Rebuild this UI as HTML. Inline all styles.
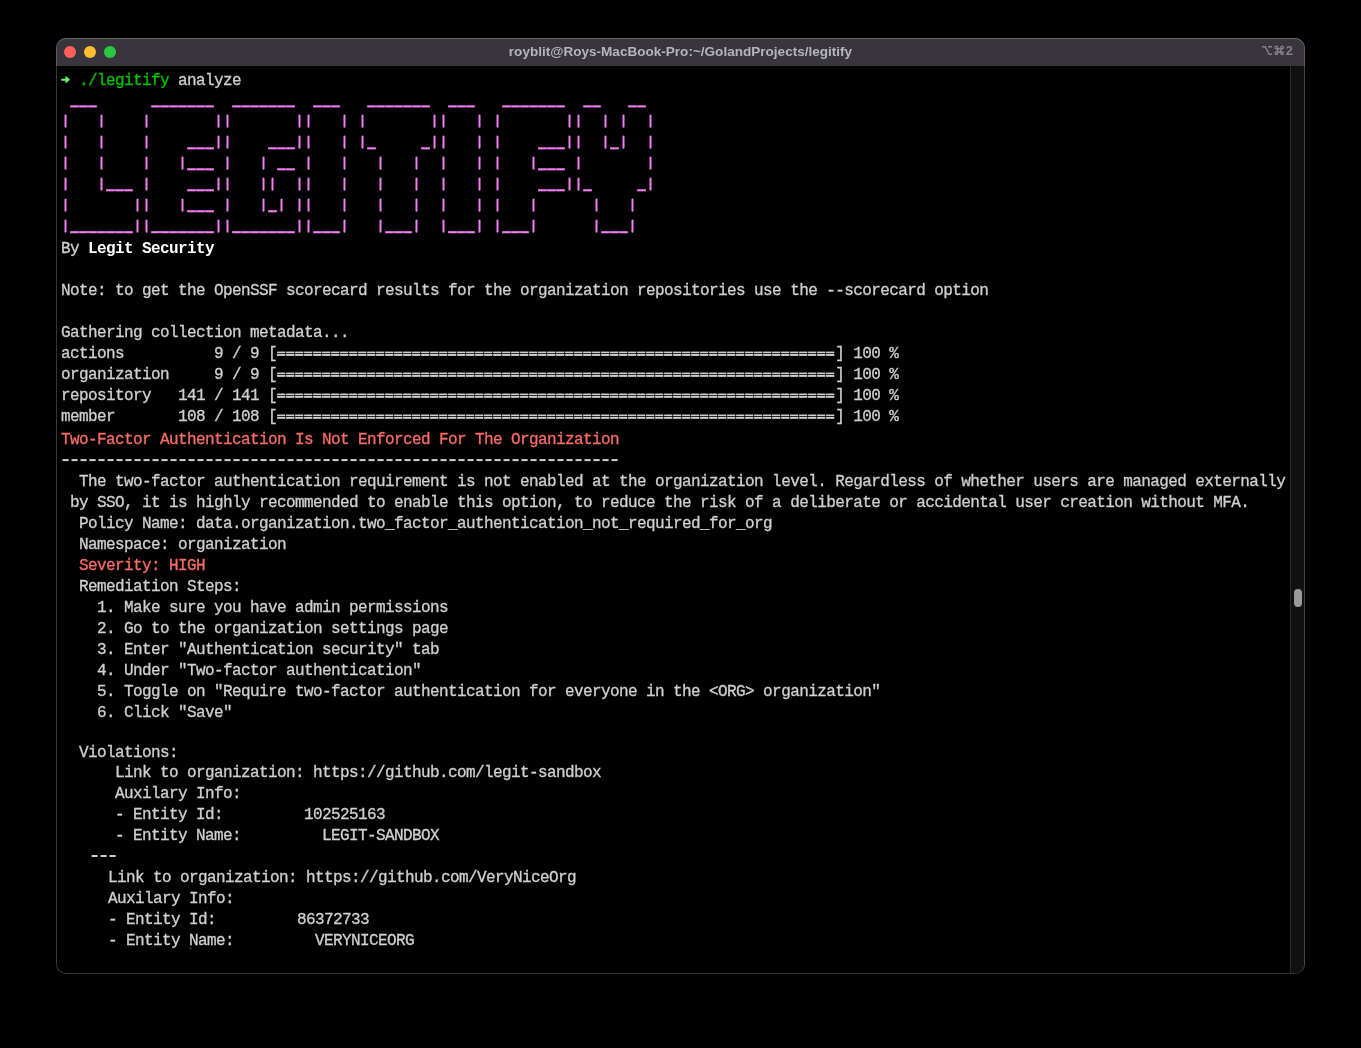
<!DOCTYPE html>
<html><head><meta charset="utf-8"><style>
html,body{margin:0;padding:0;background:#000;width:1361px;height:1048px;overflow:hidden;}
.win{position:absolute;left:56px;top:38px;width:1249px;height:936px;box-sizing:border-box;border-radius:10px;border:1px solid #363636;border-right-color:#444;background:#000;overflow:hidden;}
.tb{position:absolute;left:0;top:0;right:0;height:27px;background:#38353c;}
.tbb{position:absolute;left:56px;top:38px;width:1249px;height:28px;box-sizing:border-box;border:1px solid #67656b;border-bottom:none;border-left-color:#5f5d63;border-right-color:#5f5d63;border-radius:10px 10px 0 0;}
.title{position:absolute;left:57px;top:39px;width:1247px;height:27px;text-align:center;font-family:"Liberation Sans",sans-serif;font-weight:bold;font-size:13.55px;line-height:25.6px;color:#b6b5bb;will-change:transform;}
.dot{position:absolute;width:12px;height:12px;border-radius:50%;top:46px;}
.t{position:absolute;left:0;white-space:pre;font-family:"Liberation Mono",monospace;font-size:16px;letter-spacing:-0.6px;line-height:20.976px;color:#d0d0d0;-webkit-text-stroke:0.3px currentColor;will-change:transform;}
.g{color:#00c400}.b{color:#fff;font-weight:bold;-webkit-text-stroke:0}.r{color:#fa6c66}
.sb{position:absolute;left:1233px;top:27px;right:0;bottom:0;background:#111;border-left:1px solid #2a2a2a;}
.thumb{position:absolute;left:1294px;top:589px;width:8px;height:18px;border-radius:4px;background:#9a9a9a;}
</style></head><body>
<div class="win"><div class="tb"></div><div class="sb"></div></div>
<div class="tbb"></div>
<div class="title">royblit@Roys-MacBook-Pro:~/GolandProjects/legitify</div>
<div class="dot" style="left:64px;background:#fe5f57"></div>
<div class="dot" style="left:84px;background:#febc2e"></div>
<div class="dot" style="left:104px;background:#28c840"></div>

<div class="t" style="left:61.00px;top:71.05px"><span class="g">  ./legitify</span> analyze</div>
<div class="t" style="left:61.00px;top:238.86px">By <span class="b">Legit Security</span></div>
<div class="t" style="left:61.00px;top:280.81px">Note: to get the OpenSSF scorecard results for the organization repositories use the --scorecard option</div>
<div class="t" style="left:61.00px;top:322.77px">Gathering collection metadata...</div>
<div class="t" style="left:61.00px;top:343.74px">actions          9 / 9 [                                                              ] 100 %</div>
<div class="t" style="left:61.00px;top:364.72px">organization     9 / 9 [                                                              ] 100 %</div>
<div class="t" style="left:61.00px;top:385.69px">repository   141 / 141 [                                                              ] 100 %</div>
<div class="t" style="left:61.00px;top:406.67px">member       108 / 108 [                                                              ] 100 %</div>
<div class="t" style="left:61.00px;top:429.65px"><span class="r">Two-Factor Authentication Is Not Enforced For The Organization</span></div>
<div class="t" style="left:61.00px;top:471.60px">  The two-factor authentication requirement is not enabled at the organization level. Regardless of whether users are managed externally</div>
<div class="t" style="left:61.00px;top:492.57px"> by SSO, it is highly recommended to enable this option, to reduce the risk of a deliberate or accidental user creation without MFA.</div>
<div class="t" style="left:61.00px;top:513.55px">  Policy Name: data.organization.two_factor_authentication_not_required_for_org</div>
<div class="t" style="left:61.00px;top:534.53px">  Namespace: organization</div>
<div class="t" style="left:61.00px;top:555.50px"><span class="r">  Severity: HIGH</span></div>
<div class="t" style="left:61.00px;top:577.28px">  Remediation Steps:</div>
<div class="t" style="left:61.00px;top:598.25px">    1. Make sure you have admin permissions</div>
<div class="t" style="left:61.00px;top:619.23px">    2. Go to the organization settings page</div>
<div class="t" style="left:61.00px;top:640.21px">    3. Enter &quot;Authentication security&quot; tab</div>
<div class="t" style="left:61.00px;top:661.18px">    4. Under &quot;Two-factor authentication&quot;</div>
<div class="t" style="left:61.00px;top:682.16px">    5. Toggle on &quot;Require two-factor authentication for everyone in the &lt;ORG&gt; organization&quot;</div>
<div class="t" style="left:61.00px;top:703.13px">    6. Click &quot;Save&quot;</div>
<div class="t" style="left:61.00px;top:743.29px">  Violations:</div>
<div class="t" style="left:61.00px;top:763.26px">      Link to organization: https://github.com/legit-sandbox</div>
<div class="t" style="left:61.00px;top:784.24px">      Auxilary Info:</div>
<div class="t" style="left:61.00px;top:805.21px">      - Entity Id:         102525163</div>
<div class="t" style="left:61.00px;top:826.19px">      - Entity Name:         LEGIT-SANDBOX</div>
<div class="t" style="left:53.80px;top:868.14px">      Link to organization: https://github.com/VeryNiceOrg</div>
<div class="t" style="left:53.80px;top:889.12px">      Auxilary Info:</div>
<div class="t" style="left:53.80px;top:910.09px">      - Entity Id:         86372733</div>
<div class="t" style="left:53.80px;top:931.07px">      - Entity Name:         VERYNICEORG</div>
<svg style="position:absolute;left:0;top:0" width="1361" height="1048">
<g fill="#f57df5">
<rect x="70.15" y="105.33" width="8.7" height="2.1"/>
<rect x="79.15" y="105.33" width="8.7" height="2.1"/>
<rect x="88.15" y="105.33" width="8.7" height="2.1"/>
<rect x="151.15" y="105.33" width="8.7" height="2.1"/>
<rect x="160.15" y="105.33" width="8.7" height="2.1"/>
<rect x="169.15" y="105.33" width="8.7" height="2.1"/>
<rect x="178.15" y="105.33" width="8.7" height="2.1"/>
<rect x="187.15" y="105.33" width="8.7" height="2.1"/>
<rect x="196.15" y="105.33" width="8.7" height="2.1"/>
<rect x="205.15" y="105.33" width="8.7" height="2.1"/>
<rect x="232.15" y="105.33" width="8.7" height="2.1"/>
<rect x="241.15" y="105.33" width="8.7" height="2.1"/>
<rect x="250.15" y="105.33" width="8.7" height="2.1"/>
<rect x="259.15" y="105.33" width="8.7" height="2.1"/>
<rect x="268.15" y="105.33" width="8.7" height="2.1"/>
<rect x="277.15" y="105.33" width="8.7" height="2.1"/>
<rect x="286.15" y="105.33" width="8.7" height="2.1"/>
<rect x="313.15" y="105.33" width="8.7" height="2.1"/>
<rect x="322.15" y="105.33" width="8.7" height="2.1"/>
<rect x="331.15" y="105.33" width="8.7" height="2.1"/>
<rect x="367.15" y="105.33" width="8.7" height="2.1"/>
<rect x="376.15" y="105.33" width="8.7" height="2.1"/>
<rect x="385.15" y="105.33" width="8.7" height="2.1"/>
<rect x="394.15" y="105.33" width="8.7" height="2.1"/>
<rect x="403.15" y="105.33" width="8.7" height="2.1"/>
<rect x="412.15" y="105.33" width="8.7" height="2.1"/>
<rect x="421.15" y="105.33" width="8.7" height="2.1"/>
<rect x="448.15" y="105.33" width="8.7" height="2.1"/>
<rect x="457.15" y="105.33" width="8.7" height="2.1"/>
<rect x="466.15" y="105.33" width="8.7" height="2.1"/>
<rect x="502.15" y="105.33" width="8.7" height="2.1"/>
<rect x="511.15" y="105.33" width="8.7" height="2.1"/>
<rect x="520.15" y="105.33" width="8.7" height="2.1"/>
<rect x="529.15" y="105.33" width="8.7" height="2.1"/>
<rect x="538.15" y="105.33" width="8.7" height="2.1"/>
<rect x="547.15" y="105.33" width="8.7" height="2.1"/>
<rect x="556.15" y="105.33" width="8.7" height="2.1"/>
<rect x="583.15" y="105.33" width="8.7" height="2.1"/>
<rect x="592.15" y="105.33" width="8.7" height="2.1"/>
<rect x="628.15" y="105.33" width="8.7" height="2.1"/>
<rect x="637.15" y="105.33" width="8.7" height="2.1"/>
<rect x="64.50" y="114.55" width="2" height="13.2" rx="1"/>
<rect x="100.50" y="114.55" width="2" height="13.2" rx="1"/>
<rect x="145.50" y="114.55" width="2" height="13.2" rx="1"/>
<rect x="217.50" y="114.55" width="2" height="13.2" rx="1"/>
<rect x="226.50" y="114.55" width="2" height="13.2" rx="1"/>
<rect x="298.50" y="114.55" width="2" height="13.2" rx="1"/>
<rect x="307.50" y="114.55" width="2" height="13.2" rx="1"/>
<rect x="343.50" y="114.55" width="2" height="13.2" rx="1"/>
<rect x="361.50" y="114.55" width="2" height="13.2" rx="1"/>
<rect x="433.50" y="114.55" width="2" height="13.2" rx="1"/>
<rect x="442.50" y="114.55" width="2" height="13.2" rx="1"/>
<rect x="478.50" y="114.55" width="2" height="13.2" rx="1"/>
<rect x="496.50" y="114.55" width="2" height="13.2" rx="1"/>
<rect x="568.50" y="114.55" width="2" height="13.2" rx="1"/>
<rect x="577.50" y="114.55" width="2" height="13.2" rx="1"/>
<rect x="604.50" y="114.55" width="2" height="13.2" rx="1"/>
<rect x="622.50" y="114.55" width="2" height="13.2" rx="1"/>
<rect x="649.50" y="114.55" width="2" height="13.2" rx="1"/>
<rect x="64.50" y="135.53" width="2" height="13.2" rx="1"/>
<rect x="100.50" y="135.53" width="2" height="13.2" rx="1"/>
<rect x="145.50" y="135.53" width="2" height="13.2" rx="1"/>
<rect x="187.15" y="147.28" width="8.7" height="2.1"/>
<rect x="196.15" y="147.28" width="8.7" height="2.1"/>
<rect x="205.15" y="147.28" width="8.7" height="2.1"/>
<rect x="217.50" y="135.53" width="2" height="13.2" rx="1"/>
<rect x="226.50" y="135.53" width="2" height="13.2" rx="1"/>
<rect x="268.15" y="147.28" width="8.7" height="2.1"/>
<rect x="277.15" y="147.28" width="8.7" height="2.1"/>
<rect x="286.15" y="147.28" width="8.7" height="2.1"/>
<rect x="298.50" y="135.53" width="2" height="13.2" rx="1"/>
<rect x="307.50" y="135.53" width="2" height="13.2" rx="1"/>
<rect x="343.50" y="135.53" width="2" height="13.2" rx="1"/>
<rect x="361.50" y="135.53" width="2" height="13.2" rx="1"/>
<rect x="367.15" y="147.28" width="8.7" height="2.1"/>
<rect x="421.15" y="147.28" width="8.7" height="2.1"/>
<rect x="433.50" y="135.53" width="2" height="13.2" rx="1"/>
<rect x="442.50" y="135.53" width="2" height="13.2" rx="1"/>
<rect x="478.50" y="135.53" width="2" height="13.2" rx="1"/>
<rect x="496.50" y="135.53" width="2" height="13.2" rx="1"/>
<rect x="538.15" y="147.28" width="8.7" height="2.1"/>
<rect x="547.15" y="147.28" width="8.7" height="2.1"/>
<rect x="556.15" y="147.28" width="8.7" height="2.1"/>
<rect x="568.50" y="135.53" width="2" height="13.2" rx="1"/>
<rect x="577.50" y="135.53" width="2" height="13.2" rx="1"/>
<rect x="604.50" y="135.53" width="2" height="13.2" rx="1"/>
<rect x="610.15" y="147.28" width="8.7" height="2.1"/>
<rect x="622.50" y="135.53" width="2" height="13.2" rx="1"/>
<rect x="649.50" y="135.53" width="2" height="13.2" rx="1"/>
<rect x="64.50" y="156.50" width="2" height="13.2" rx="1"/>
<rect x="100.50" y="156.50" width="2" height="13.2" rx="1"/>
<rect x="145.50" y="156.50" width="2" height="13.2" rx="1"/>
<rect x="181.50" y="156.50" width="2" height="13.2" rx="1"/>
<rect x="187.15" y="168.25" width="8.7" height="2.1"/>
<rect x="196.15" y="168.25" width="8.7" height="2.1"/>
<rect x="205.15" y="168.25" width="8.7" height="2.1"/>
<rect x="226.50" y="156.50" width="2" height="13.2" rx="1"/>
<rect x="262.50" y="156.50" width="2" height="13.2" rx="1"/>
<rect x="277.15" y="168.25" width="8.7" height="2.1"/>
<rect x="286.15" y="168.25" width="8.7" height="2.1"/>
<rect x="307.50" y="156.50" width="2" height="13.2" rx="1"/>
<rect x="343.50" y="156.50" width="2" height="13.2" rx="1"/>
<rect x="379.50" y="156.50" width="2" height="13.2" rx="1"/>
<rect x="415.50" y="156.50" width="2" height="13.2" rx="1"/>
<rect x="442.50" y="156.50" width="2" height="13.2" rx="1"/>
<rect x="478.50" y="156.50" width="2" height="13.2" rx="1"/>
<rect x="496.50" y="156.50" width="2" height="13.2" rx="1"/>
<rect x="532.50" y="156.50" width="2" height="13.2" rx="1"/>
<rect x="538.15" y="168.25" width="8.7" height="2.1"/>
<rect x="547.15" y="168.25" width="8.7" height="2.1"/>
<rect x="556.15" y="168.25" width="8.7" height="2.1"/>
<rect x="577.50" y="156.50" width="2" height="13.2" rx="1"/>
<rect x="649.50" y="156.50" width="2" height="13.2" rx="1"/>
<rect x="64.50" y="177.48" width="2" height="13.2" rx="1"/>
<rect x="100.50" y="177.48" width="2" height="13.2" rx="1"/>
<rect x="106.15" y="189.23" width="8.7" height="2.1"/>
<rect x="115.15" y="189.23" width="8.7" height="2.1"/>
<rect x="124.15" y="189.23" width="8.7" height="2.1"/>
<rect x="145.50" y="177.48" width="2" height="13.2" rx="1"/>
<rect x="187.15" y="189.23" width="8.7" height="2.1"/>
<rect x="196.15" y="189.23" width="8.7" height="2.1"/>
<rect x="205.15" y="189.23" width="8.7" height="2.1"/>
<rect x="217.50" y="177.48" width="2" height="13.2" rx="1"/>
<rect x="226.50" y="177.48" width="2" height="13.2" rx="1"/>
<rect x="262.50" y="177.48" width="2" height="13.2" rx="1"/>
<rect x="271.50" y="177.48" width="2" height="13.2" rx="1"/>
<rect x="298.50" y="177.48" width="2" height="13.2" rx="1"/>
<rect x="307.50" y="177.48" width="2" height="13.2" rx="1"/>
<rect x="343.50" y="177.48" width="2" height="13.2" rx="1"/>
<rect x="379.50" y="177.48" width="2" height="13.2" rx="1"/>
<rect x="415.50" y="177.48" width="2" height="13.2" rx="1"/>
<rect x="442.50" y="177.48" width="2" height="13.2" rx="1"/>
<rect x="478.50" y="177.48" width="2" height="13.2" rx="1"/>
<rect x="496.50" y="177.48" width="2" height="13.2" rx="1"/>
<rect x="538.15" y="189.23" width="8.7" height="2.1"/>
<rect x="547.15" y="189.23" width="8.7" height="2.1"/>
<rect x="556.15" y="189.23" width="8.7" height="2.1"/>
<rect x="568.50" y="177.48" width="2" height="13.2" rx="1"/>
<rect x="577.50" y="177.48" width="2" height="13.2" rx="1"/>
<rect x="583.15" y="189.23" width="8.7" height="2.1"/>
<rect x="637.15" y="189.23" width="8.7" height="2.1"/>
<rect x="649.50" y="177.48" width="2" height="13.2" rx="1"/>
<rect x="64.50" y="198.46" width="2" height="13.2" rx="1"/>
<rect x="136.50" y="198.46" width="2" height="13.2" rx="1"/>
<rect x="145.50" y="198.46" width="2" height="13.2" rx="1"/>
<rect x="181.50" y="198.46" width="2" height="13.2" rx="1"/>
<rect x="187.15" y="210.21" width="8.7" height="2.1"/>
<rect x="196.15" y="210.21" width="8.7" height="2.1"/>
<rect x="205.15" y="210.21" width="8.7" height="2.1"/>
<rect x="226.50" y="198.46" width="2" height="13.2" rx="1"/>
<rect x="262.50" y="198.46" width="2" height="13.2" rx="1"/>
<rect x="268.15" y="210.21" width="8.7" height="2.1"/>
<rect x="280.50" y="198.46" width="2" height="13.2" rx="1"/>
<rect x="298.50" y="198.46" width="2" height="13.2" rx="1"/>
<rect x="307.50" y="198.46" width="2" height="13.2" rx="1"/>
<rect x="343.50" y="198.46" width="2" height="13.2" rx="1"/>
<rect x="379.50" y="198.46" width="2" height="13.2" rx="1"/>
<rect x="415.50" y="198.46" width="2" height="13.2" rx="1"/>
<rect x="442.50" y="198.46" width="2" height="13.2" rx="1"/>
<rect x="478.50" y="198.46" width="2" height="13.2" rx="1"/>
<rect x="496.50" y="198.46" width="2" height="13.2" rx="1"/>
<rect x="532.50" y="198.46" width="2" height="13.2" rx="1"/>
<rect x="595.50" y="198.46" width="2" height="13.2" rx="1"/>
<rect x="631.50" y="198.46" width="2" height="13.2" rx="1"/>
<rect x="64.50" y="219.43" width="2" height="13.2" rx="1"/>
<rect x="70.15" y="231.18" width="8.7" height="2.1"/>
<rect x="79.15" y="231.18" width="8.7" height="2.1"/>
<rect x="88.15" y="231.18" width="8.7" height="2.1"/>
<rect x="97.15" y="231.18" width="8.7" height="2.1"/>
<rect x="106.15" y="231.18" width="8.7" height="2.1"/>
<rect x="115.15" y="231.18" width="8.7" height="2.1"/>
<rect x="124.15" y="231.18" width="8.7" height="2.1"/>
<rect x="136.50" y="219.43" width="2" height="13.2" rx="1"/>
<rect x="145.50" y="219.43" width="2" height="13.2" rx="1"/>
<rect x="151.15" y="231.18" width="8.7" height="2.1"/>
<rect x="160.15" y="231.18" width="8.7" height="2.1"/>
<rect x="169.15" y="231.18" width="8.7" height="2.1"/>
<rect x="178.15" y="231.18" width="8.7" height="2.1"/>
<rect x="187.15" y="231.18" width="8.7" height="2.1"/>
<rect x="196.15" y="231.18" width="8.7" height="2.1"/>
<rect x="205.15" y="231.18" width="8.7" height="2.1"/>
<rect x="217.50" y="219.43" width="2" height="13.2" rx="1"/>
<rect x="226.50" y="219.43" width="2" height="13.2" rx="1"/>
<rect x="232.15" y="231.18" width="8.7" height="2.1"/>
<rect x="241.15" y="231.18" width="8.7" height="2.1"/>
<rect x="250.15" y="231.18" width="8.7" height="2.1"/>
<rect x="259.15" y="231.18" width="8.7" height="2.1"/>
<rect x="268.15" y="231.18" width="8.7" height="2.1"/>
<rect x="277.15" y="231.18" width="8.7" height="2.1"/>
<rect x="286.15" y="231.18" width="8.7" height="2.1"/>
<rect x="298.50" y="219.43" width="2" height="13.2" rx="1"/>
<rect x="307.50" y="219.43" width="2" height="13.2" rx="1"/>
<rect x="313.15" y="231.18" width="8.7" height="2.1"/>
<rect x="322.15" y="231.18" width="8.7" height="2.1"/>
<rect x="331.15" y="231.18" width="8.7" height="2.1"/>
<rect x="343.50" y="219.43" width="2" height="13.2" rx="1"/>
<rect x="379.50" y="219.43" width="2" height="13.2" rx="1"/>
<rect x="385.15" y="231.18" width="8.7" height="2.1"/>
<rect x="394.15" y="231.18" width="8.7" height="2.1"/>
<rect x="403.15" y="231.18" width="8.7" height="2.1"/>
<rect x="415.50" y="219.43" width="2" height="13.2" rx="1"/>
<rect x="442.50" y="219.43" width="2" height="13.2" rx="1"/>
<rect x="448.15" y="231.18" width="8.7" height="2.1"/>
<rect x="457.15" y="231.18" width="8.7" height="2.1"/>
<rect x="466.15" y="231.18" width="8.7" height="2.1"/>
<rect x="478.50" y="219.43" width="2" height="13.2" rx="1"/>
<rect x="496.50" y="219.43" width="2" height="13.2" rx="1"/>
<rect x="502.15" y="231.18" width="8.7" height="2.1"/>
<rect x="511.15" y="231.18" width="8.7" height="2.1"/>
<rect x="520.15" y="231.18" width="8.7" height="2.1"/>
<rect x="532.50" y="219.43" width="2" height="13.2" rx="1"/>
<rect x="595.50" y="219.43" width="2" height="13.2" rx="1"/>
<rect x="601.15" y="231.18" width="8.7" height="2.1"/>
<rect x="610.15" y="231.18" width="8.7" height="2.1"/>
<rect x="619.15" y="231.18" width="8.7" height="2.1"/>
<rect x="631.50" y="219.43" width="2" height="13.2" rx="1"/>
</g>
<rect x="61.1" y="78.65" width="5.5" height="2" rx="0.9" fill="#62fb6c"/>
<path d="M65.9 76.6 L69.6 79.65 L65.9 82.7 Z" stroke="#62fb6c" stroke-width="0.9" stroke-linejoin="round" fill="#62fb6c"/>
<g fill="#d0d0d0">
<rect x="277.10" y="351.59" width="8.2" height="1.6"/><rect x="277.10" y="353.99" width="8.2" height="1.9"/>
<rect x="286.10" y="351.59" width="8.2" height="1.6"/><rect x="286.10" y="353.99" width="8.2" height="1.9"/>
<rect x="295.10" y="351.59" width="8.2" height="1.6"/><rect x="295.10" y="353.99" width="8.2" height="1.9"/>
<rect x="304.10" y="351.59" width="8.2" height="1.6"/><rect x="304.10" y="353.99" width="8.2" height="1.9"/>
<rect x="313.10" y="351.59" width="8.2" height="1.6"/><rect x="313.10" y="353.99" width="8.2" height="1.9"/>
<rect x="322.10" y="351.59" width="8.2" height="1.6"/><rect x="322.10" y="353.99" width="8.2" height="1.9"/>
<rect x="331.10" y="351.59" width="8.2" height="1.6"/><rect x="331.10" y="353.99" width="8.2" height="1.9"/>
<rect x="340.10" y="351.59" width="8.2" height="1.6"/><rect x="340.10" y="353.99" width="8.2" height="1.9"/>
<rect x="349.10" y="351.59" width="8.2" height="1.6"/><rect x="349.10" y="353.99" width="8.2" height="1.9"/>
<rect x="358.10" y="351.59" width="8.2" height="1.6"/><rect x="358.10" y="353.99" width="8.2" height="1.9"/>
<rect x="367.10" y="351.59" width="8.2" height="1.6"/><rect x="367.10" y="353.99" width="8.2" height="1.9"/>
<rect x="376.10" y="351.59" width="8.2" height="1.6"/><rect x="376.10" y="353.99" width="8.2" height="1.9"/>
<rect x="385.10" y="351.59" width="8.2" height="1.6"/><rect x="385.10" y="353.99" width="8.2" height="1.9"/>
<rect x="394.10" y="351.59" width="8.2" height="1.6"/><rect x="394.10" y="353.99" width="8.2" height="1.9"/>
<rect x="403.10" y="351.59" width="8.2" height="1.6"/><rect x="403.10" y="353.99" width="8.2" height="1.9"/>
<rect x="412.10" y="351.59" width="8.2" height="1.6"/><rect x="412.10" y="353.99" width="8.2" height="1.9"/>
<rect x="421.10" y="351.59" width="8.2" height="1.6"/><rect x="421.10" y="353.99" width="8.2" height="1.9"/>
<rect x="430.10" y="351.59" width="8.2" height="1.6"/><rect x="430.10" y="353.99" width="8.2" height="1.9"/>
<rect x="439.10" y="351.59" width="8.2" height="1.6"/><rect x="439.10" y="353.99" width="8.2" height="1.9"/>
<rect x="448.10" y="351.59" width="8.2" height="1.6"/><rect x="448.10" y="353.99" width="8.2" height="1.9"/>
<rect x="457.10" y="351.59" width="8.2" height="1.6"/><rect x="457.10" y="353.99" width="8.2" height="1.9"/>
<rect x="466.10" y="351.59" width="8.2" height="1.6"/><rect x="466.10" y="353.99" width="8.2" height="1.9"/>
<rect x="475.10" y="351.59" width="8.2" height="1.6"/><rect x="475.10" y="353.99" width="8.2" height="1.9"/>
<rect x="484.10" y="351.59" width="8.2" height="1.6"/><rect x="484.10" y="353.99" width="8.2" height="1.9"/>
<rect x="493.10" y="351.59" width="8.2" height="1.6"/><rect x="493.10" y="353.99" width="8.2" height="1.9"/>
<rect x="502.10" y="351.59" width="8.2" height="1.6"/><rect x="502.10" y="353.99" width="8.2" height="1.9"/>
<rect x="511.10" y="351.59" width="8.2" height="1.6"/><rect x="511.10" y="353.99" width="8.2" height="1.9"/>
<rect x="520.10" y="351.59" width="8.2" height="1.6"/><rect x="520.10" y="353.99" width="8.2" height="1.9"/>
<rect x="529.10" y="351.59" width="8.2" height="1.6"/><rect x="529.10" y="353.99" width="8.2" height="1.9"/>
<rect x="538.10" y="351.59" width="8.2" height="1.6"/><rect x="538.10" y="353.99" width="8.2" height="1.9"/>
<rect x="547.10" y="351.59" width="8.2" height="1.6"/><rect x="547.10" y="353.99" width="8.2" height="1.9"/>
<rect x="556.10" y="351.59" width="8.2" height="1.6"/><rect x="556.10" y="353.99" width="8.2" height="1.9"/>
<rect x="565.10" y="351.59" width="8.2" height="1.6"/><rect x="565.10" y="353.99" width="8.2" height="1.9"/>
<rect x="574.10" y="351.59" width="8.2" height="1.6"/><rect x="574.10" y="353.99" width="8.2" height="1.9"/>
<rect x="583.10" y="351.59" width="8.2" height="1.6"/><rect x="583.10" y="353.99" width="8.2" height="1.9"/>
<rect x="592.10" y="351.59" width="8.2" height="1.6"/><rect x="592.10" y="353.99" width="8.2" height="1.9"/>
<rect x="601.10" y="351.59" width="8.2" height="1.6"/><rect x="601.10" y="353.99" width="8.2" height="1.9"/>
<rect x="610.10" y="351.59" width="8.2" height="1.6"/><rect x="610.10" y="353.99" width="8.2" height="1.9"/>
<rect x="619.10" y="351.59" width="8.2" height="1.6"/><rect x="619.10" y="353.99" width="8.2" height="1.9"/>
<rect x="628.10" y="351.59" width="8.2" height="1.6"/><rect x="628.10" y="353.99" width="8.2" height="1.9"/>
<rect x="637.10" y="351.59" width="8.2" height="1.6"/><rect x="637.10" y="353.99" width="8.2" height="1.9"/>
<rect x="646.10" y="351.59" width="8.2" height="1.6"/><rect x="646.10" y="353.99" width="8.2" height="1.9"/>
<rect x="655.10" y="351.59" width="8.2" height="1.6"/><rect x="655.10" y="353.99" width="8.2" height="1.9"/>
<rect x="664.10" y="351.59" width="8.2" height="1.6"/><rect x="664.10" y="353.99" width="8.2" height="1.9"/>
<rect x="673.10" y="351.59" width="8.2" height="1.6"/><rect x="673.10" y="353.99" width="8.2" height="1.9"/>
<rect x="682.10" y="351.59" width="8.2" height="1.6"/><rect x="682.10" y="353.99" width="8.2" height="1.9"/>
<rect x="691.10" y="351.59" width="8.2" height="1.6"/><rect x="691.10" y="353.99" width="8.2" height="1.9"/>
<rect x="700.10" y="351.59" width="8.2" height="1.6"/><rect x="700.10" y="353.99" width="8.2" height="1.9"/>
<rect x="709.10" y="351.59" width="8.2" height="1.6"/><rect x="709.10" y="353.99" width="8.2" height="1.9"/>
<rect x="718.10" y="351.59" width="8.2" height="1.6"/><rect x="718.10" y="353.99" width="8.2" height="1.9"/>
<rect x="727.10" y="351.59" width="8.2" height="1.6"/><rect x="727.10" y="353.99" width="8.2" height="1.9"/>
<rect x="736.10" y="351.59" width="8.2" height="1.6"/><rect x="736.10" y="353.99" width="8.2" height="1.9"/>
<rect x="745.10" y="351.59" width="8.2" height="1.6"/><rect x="745.10" y="353.99" width="8.2" height="1.9"/>
<rect x="754.10" y="351.59" width="8.2" height="1.6"/><rect x="754.10" y="353.99" width="8.2" height="1.9"/>
<rect x="763.10" y="351.59" width="8.2" height="1.6"/><rect x="763.10" y="353.99" width="8.2" height="1.9"/>
<rect x="772.10" y="351.59" width="8.2" height="1.6"/><rect x="772.10" y="353.99" width="8.2" height="1.9"/>
<rect x="781.10" y="351.59" width="8.2" height="1.6"/><rect x="781.10" y="353.99" width="8.2" height="1.9"/>
<rect x="790.10" y="351.59" width="8.2" height="1.6"/><rect x="790.10" y="353.99" width="8.2" height="1.9"/>
<rect x="799.10" y="351.59" width="8.2" height="1.6"/><rect x="799.10" y="353.99" width="8.2" height="1.9"/>
<rect x="808.10" y="351.59" width="8.2" height="1.6"/><rect x="808.10" y="353.99" width="8.2" height="1.9"/>
<rect x="817.10" y="351.59" width="8.2" height="1.6"/><rect x="817.10" y="353.99" width="8.2" height="1.9"/>
<rect x="826.10" y="351.59" width="8.2" height="1.6"/><rect x="826.10" y="353.99" width="8.2" height="1.9"/>
<rect x="277.10" y="372.56" width="8.2" height="1.6"/><rect x="277.10" y="374.96" width="8.2" height="1.9"/>
<rect x="286.10" y="372.56" width="8.2" height="1.6"/><rect x="286.10" y="374.96" width="8.2" height="1.9"/>
<rect x="295.10" y="372.56" width="8.2" height="1.6"/><rect x="295.10" y="374.96" width="8.2" height="1.9"/>
<rect x="304.10" y="372.56" width="8.2" height="1.6"/><rect x="304.10" y="374.96" width="8.2" height="1.9"/>
<rect x="313.10" y="372.56" width="8.2" height="1.6"/><rect x="313.10" y="374.96" width="8.2" height="1.9"/>
<rect x="322.10" y="372.56" width="8.2" height="1.6"/><rect x="322.10" y="374.96" width="8.2" height="1.9"/>
<rect x="331.10" y="372.56" width="8.2" height="1.6"/><rect x="331.10" y="374.96" width="8.2" height="1.9"/>
<rect x="340.10" y="372.56" width="8.2" height="1.6"/><rect x="340.10" y="374.96" width="8.2" height="1.9"/>
<rect x="349.10" y="372.56" width="8.2" height="1.6"/><rect x="349.10" y="374.96" width="8.2" height="1.9"/>
<rect x="358.10" y="372.56" width="8.2" height="1.6"/><rect x="358.10" y="374.96" width="8.2" height="1.9"/>
<rect x="367.10" y="372.56" width="8.2" height="1.6"/><rect x="367.10" y="374.96" width="8.2" height="1.9"/>
<rect x="376.10" y="372.56" width="8.2" height="1.6"/><rect x="376.10" y="374.96" width="8.2" height="1.9"/>
<rect x="385.10" y="372.56" width="8.2" height="1.6"/><rect x="385.10" y="374.96" width="8.2" height="1.9"/>
<rect x="394.10" y="372.56" width="8.2" height="1.6"/><rect x="394.10" y="374.96" width="8.2" height="1.9"/>
<rect x="403.10" y="372.56" width="8.2" height="1.6"/><rect x="403.10" y="374.96" width="8.2" height="1.9"/>
<rect x="412.10" y="372.56" width="8.2" height="1.6"/><rect x="412.10" y="374.96" width="8.2" height="1.9"/>
<rect x="421.10" y="372.56" width="8.2" height="1.6"/><rect x="421.10" y="374.96" width="8.2" height="1.9"/>
<rect x="430.10" y="372.56" width="8.2" height="1.6"/><rect x="430.10" y="374.96" width="8.2" height="1.9"/>
<rect x="439.10" y="372.56" width="8.2" height="1.6"/><rect x="439.10" y="374.96" width="8.2" height="1.9"/>
<rect x="448.10" y="372.56" width="8.2" height="1.6"/><rect x="448.10" y="374.96" width="8.2" height="1.9"/>
<rect x="457.10" y="372.56" width="8.2" height="1.6"/><rect x="457.10" y="374.96" width="8.2" height="1.9"/>
<rect x="466.10" y="372.56" width="8.2" height="1.6"/><rect x="466.10" y="374.96" width="8.2" height="1.9"/>
<rect x="475.10" y="372.56" width="8.2" height="1.6"/><rect x="475.10" y="374.96" width="8.2" height="1.9"/>
<rect x="484.10" y="372.56" width="8.2" height="1.6"/><rect x="484.10" y="374.96" width="8.2" height="1.9"/>
<rect x="493.10" y="372.56" width="8.2" height="1.6"/><rect x="493.10" y="374.96" width="8.2" height="1.9"/>
<rect x="502.10" y="372.56" width="8.2" height="1.6"/><rect x="502.10" y="374.96" width="8.2" height="1.9"/>
<rect x="511.10" y="372.56" width="8.2" height="1.6"/><rect x="511.10" y="374.96" width="8.2" height="1.9"/>
<rect x="520.10" y="372.56" width="8.2" height="1.6"/><rect x="520.10" y="374.96" width="8.2" height="1.9"/>
<rect x="529.10" y="372.56" width="8.2" height="1.6"/><rect x="529.10" y="374.96" width="8.2" height="1.9"/>
<rect x="538.10" y="372.56" width="8.2" height="1.6"/><rect x="538.10" y="374.96" width="8.2" height="1.9"/>
<rect x="547.10" y="372.56" width="8.2" height="1.6"/><rect x="547.10" y="374.96" width="8.2" height="1.9"/>
<rect x="556.10" y="372.56" width="8.2" height="1.6"/><rect x="556.10" y="374.96" width="8.2" height="1.9"/>
<rect x="565.10" y="372.56" width="8.2" height="1.6"/><rect x="565.10" y="374.96" width="8.2" height="1.9"/>
<rect x="574.10" y="372.56" width="8.2" height="1.6"/><rect x="574.10" y="374.96" width="8.2" height="1.9"/>
<rect x="583.10" y="372.56" width="8.2" height="1.6"/><rect x="583.10" y="374.96" width="8.2" height="1.9"/>
<rect x="592.10" y="372.56" width="8.2" height="1.6"/><rect x="592.10" y="374.96" width="8.2" height="1.9"/>
<rect x="601.10" y="372.56" width="8.2" height="1.6"/><rect x="601.10" y="374.96" width="8.2" height="1.9"/>
<rect x="610.10" y="372.56" width="8.2" height="1.6"/><rect x="610.10" y="374.96" width="8.2" height="1.9"/>
<rect x="619.10" y="372.56" width="8.2" height="1.6"/><rect x="619.10" y="374.96" width="8.2" height="1.9"/>
<rect x="628.10" y="372.56" width="8.2" height="1.6"/><rect x="628.10" y="374.96" width="8.2" height="1.9"/>
<rect x="637.10" y="372.56" width="8.2" height="1.6"/><rect x="637.10" y="374.96" width="8.2" height="1.9"/>
<rect x="646.10" y="372.56" width="8.2" height="1.6"/><rect x="646.10" y="374.96" width="8.2" height="1.9"/>
<rect x="655.10" y="372.56" width="8.2" height="1.6"/><rect x="655.10" y="374.96" width="8.2" height="1.9"/>
<rect x="664.10" y="372.56" width="8.2" height="1.6"/><rect x="664.10" y="374.96" width="8.2" height="1.9"/>
<rect x="673.10" y="372.56" width="8.2" height="1.6"/><rect x="673.10" y="374.96" width="8.2" height="1.9"/>
<rect x="682.10" y="372.56" width="8.2" height="1.6"/><rect x="682.10" y="374.96" width="8.2" height="1.9"/>
<rect x="691.10" y="372.56" width="8.2" height="1.6"/><rect x="691.10" y="374.96" width="8.2" height="1.9"/>
<rect x="700.10" y="372.56" width="8.2" height="1.6"/><rect x="700.10" y="374.96" width="8.2" height="1.9"/>
<rect x="709.10" y="372.56" width="8.2" height="1.6"/><rect x="709.10" y="374.96" width="8.2" height="1.9"/>
<rect x="718.10" y="372.56" width="8.2" height="1.6"/><rect x="718.10" y="374.96" width="8.2" height="1.9"/>
<rect x="727.10" y="372.56" width="8.2" height="1.6"/><rect x="727.10" y="374.96" width="8.2" height="1.9"/>
<rect x="736.10" y="372.56" width="8.2" height="1.6"/><rect x="736.10" y="374.96" width="8.2" height="1.9"/>
<rect x="745.10" y="372.56" width="8.2" height="1.6"/><rect x="745.10" y="374.96" width="8.2" height="1.9"/>
<rect x="754.10" y="372.56" width="8.2" height="1.6"/><rect x="754.10" y="374.96" width="8.2" height="1.9"/>
<rect x="763.10" y="372.56" width="8.2" height="1.6"/><rect x="763.10" y="374.96" width="8.2" height="1.9"/>
<rect x="772.10" y="372.56" width="8.2" height="1.6"/><rect x="772.10" y="374.96" width="8.2" height="1.9"/>
<rect x="781.10" y="372.56" width="8.2" height="1.6"/><rect x="781.10" y="374.96" width="8.2" height="1.9"/>
<rect x="790.10" y="372.56" width="8.2" height="1.6"/><rect x="790.10" y="374.96" width="8.2" height="1.9"/>
<rect x="799.10" y="372.56" width="8.2" height="1.6"/><rect x="799.10" y="374.96" width="8.2" height="1.9"/>
<rect x="808.10" y="372.56" width="8.2" height="1.6"/><rect x="808.10" y="374.96" width="8.2" height="1.9"/>
<rect x="817.10" y="372.56" width="8.2" height="1.6"/><rect x="817.10" y="374.96" width="8.2" height="1.9"/>
<rect x="826.10" y="372.56" width="8.2" height="1.6"/><rect x="826.10" y="374.96" width="8.2" height="1.9"/>
<rect x="277.10" y="393.54" width="8.2" height="1.6"/><rect x="277.10" y="395.94" width="8.2" height="1.9"/>
<rect x="286.10" y="393.54" width="8.2" height="1.6"/><rect x="286.10" y="395.94" width="8.2" height="1.9"/>
<rect x="295.10" y="393.54" width="8.2" height="1.6"/><rect x="295.10" y="395.94" width="8.2" height="1.9"/>
<rect x="304.10" y="393.54" width="8.2" height="1.6"/><rect x="304.10" y="395.94" width="8.2" height="1.9"/>
<rect x="313.10" y="393.54" width="8.2" height="1.6"/><rect x="313.10" y="395.94" width="8.2" height="1.9"/>
<rect x="322.10" y="393.54" width="8.2" height="1.6"/><rect x="322.10" y="395.94" width="8.2" height="1.9"/>
<rect x="331.10" y="393.54" width="8.2" height="1.6"/><rect x="331.10" y="395.94" width="8.2" height="1.9"/>
<rect x="340.10" y="393.54" width="8.2" height="1.6"/><rect x="340.10" y="395.94" width="8.2" height="1.9"/>
<rect x="349.10" y="393.54" width="8.2" height="1.6"/><rect x="349.10" y="395.94" width="8.2" height="1.9"/>
<rect x="358.10" y="393.54" width="8.2" height="1.6"/><rect x="358.10" y="395.94" width="8.2" height="1.9"/>
<rect x="367.10" y="393.54" width="8.2" height="1.6"/><rect x="367.10" y="395.94" width="8.2" height="1.9"/>
<rect x="376.10" y="393.54" width="8.2" height="1.6"/><rect x="376.10" y="395.94" width="8.2" height="1.9"/>
<rect x="385.10" y="393.54" width="8.2" height="1.6"/><rect x="385.10" y="395.94" width="8.2" height="1.9"/>
<rect x="394.10" y="393.54" width="8.2" height="1.6"/><rect x="394.10" y="395.94" width="8.2" height="1.9"/>
<rect x="403.10" y="393.54" width="8.2" height="1.6"/><rect x="403.10" y="395.94" width="8.2" height="1.9"/>
<rect x="412.10" y="393.54" width="8.2" height="1.6"/><rect x="412.10" y="395.94" width="8.2" height="1.9"/>
<rect x="421.10" y="393.54" width="8.2" height="1.6"/><rect x="421.10" y="395.94" width="8.2" height="1.9"/>
<rect x="430.10" y="393.54" width="8.2" height="1.6"/><rect x="430.10" y="395.94" width="8.2" height="1.9"/>
<rect x="439.10" y="393.54" width="8.2" height="1.6"/><rect x="439.10" y="395.94" width="8.2" height="1.9"/>
<rect x="448.10" y="393.54" width="8.2" height="1.6"/><rect x="448.10" y="395.94" width="8.2" height="1.9"/>
<rect x="457.10" y="393.54" width="8.2" height="1.6"/><rect x="457.10" y="395.94" width="8.2" height="1.9"/>
<rect x="466.10" y="393.54" width="8.2" height="1.6"/><rect x="466.10" y="395.94" width="8.2" height="1.9"/>
<rect x="475.10" y="393.54" width="8.2" height="1.6"/><rect x="475.10" y="395.94" width="8.2" height="1.9"/>
<rect x="484.10" y="393.54" width="8.2" height="1.6"/><rect x="484.10" y="395.94" width="8.2" height="1.9"/>
<rect x="493.10" y="393.54" width="8.2" height="1.6"/><rect x="493.10" y="395.94" width="8.2" height="1.9"/>
<rect x="502.10" y="393.54" width="8.2" height="1.6"/><rect x="502.10" y="395.94" width="8.2" height="1.9"/>
<rect x="511.10" y="393.54" width="8.2" height="1.6"/><rect x="511.10" y="395.94" width="8.2" height="1.9"/>
<rect x="520.10" y="393.54" width="8.2" height="1.6"/><rect x="520.10" y="395.94" width="8.2" height="1.9"/>
<rect x="529.10" y="393.54" width="8.2" height="1.6"/><rect x="529.10" y="395.94" width="8.2" height="1.9"/>
<rect x="538.10" y="393.54" width="8.2" height="1.6"/><rect x="538.10" y="395.94" width="8.2" height="1.9"/>
<rect x="547.10" y="393.54" width="8.2" height="1.6"/><rect x="547.10" y="395.94" width="8.2" height="1.9"/>
<rect x="556.10" y="393.54" width="8.2" height="1.6"/><rect x="556.10" y="395.94" width="8.2" height="1.9"/>
<rect x="565.10" y="393.54" width="8.2" height="1.6"/><rect x="565.10" y="395.94" width="8.2" height="1.9"/>
<rect x="574.10" y="393.54" width="8.2" height="1.6"/><rect x="574.10" y="395.94" width="8.2" height="1.9"/>
<rect x="583.10" y="393.54" width="8.2" height="1.6"/><rect x="583.10" y="395.94" width="8.2" height="1.9"/>
<rect x="592.10" y="393.54" width="8.2" height="1.6"/><rect x="592.10" y="395.94" width="8.2" height="1.9"/>
<rect x="601.10" y="393.54" width="8.2" height="1.6"/><rect x="601.10" y="395.94" width="8.2" height="1.9"/>
<rect x="610.10" y="393.54" width="8.2" height="1.6"/><rect x="610.10" y="395.94" width="8.2" height="1.9"/>
<rect x="619.10" y="393.54" width="8.2" height="1.6"/><rect x="619.10" y="395.94" width="8.2" height="1.9"/>
<rect x="628.10" y="393.54" width="8.2" height="1.6"/><rect x="628.10" y="395.94" width="8.2" height="1.9"/>
<rect x="637.10" y="393.54" width="8.2" height="1.6"/><rect x="637.10" y="395.94" width="8.2" height="1.9"/>
<rect x="646.10" y="393.54" width="8.2" height="1.6"/><rect x="646.10" y="395.94" width="8.2" height="1.9"/>
<rect x="655.10" y="393.54" width="8.2" height="1.6"/><rect x="655.10" y="395.94" width="8.2" height="1.9"/>
<rect x="664.10" y="393.54" width="8.2" height="1.6"/><rect x="664.10" y="395.94" width="8.2" height="1.9"/>
<rect x="673.10" y="393.54" width="8.2" height="1.6"/><rect x="673.10" y="395.94" width="8.2" height="1.9"/>
<rect x="682.10" y="393.54" width="8.2" height="1.6"/><rect x="682.10" y="395.94" width="8.2" height="1.9"/>
<rect x="691.10" y="393.54" width="8.2" height="1.6"/><rect x="691.10" y="395.94" width="8.2" height="1.9"/>
<rect x="700.10" y="393.54" width="8.2" height="1.6"/><rect x="700.10" y="395.94" width="8.2" height="1.9"/>
<rect x="709.10" y="393.54" width="8.2" height="1.6"/><rect x="709.10" y="395.94" width="8.2" height="1.9"/>
<rect x="718.10" y="393.54" width="8.2" height="1.6"/><rect x="718.10" y="395.94" width="8.2" height="1.9"/>
<rect x="727.10" y="393.54" width="8.2" height="1.6"/><rect x="727.10" y="395.94" width="8.2" height="1.9"/>
<rect x="736.10" y="393.54" width="8.2" height="1.6"/><rect x="736.10" y="395.94" width="8.2" height="1.9"/>
<rect x="745.10" y="393.54" width="8.2" height="1.6"/><rect x="745.10" y="395.94" width="8.2" height="1.9"/>
<rect x="754.10" y="393.54" width="8.2" height="1.6"/><rect x="754.10" y="395.94" width="8.2" height="1.9"/>
<rect x="763.10" y="393.54" width="8.2" height="1.6"/><rect x="763.10" y="395.94" width="8.2" height="1.9"/>
<rect x="772.10" y="393.54" width="8.2" height="1.6"/><rect x="772.10" y="395.94" width="8.2" height="1.9"/>
<rect x="781.10" y="393.54" width="8.2" height="1.6"/><rect x="781.10" y="395.94" width="8.2" height="1.9"/>
<rect x="790.10" y="393.54" width="8.2" height="1.6"/><rect x="790.10" y="395.94" width="8.2" height="1.9"/>
<rect x="799.10" y="393.54" width="8.2" height="1.6"/><rect x="799.10" y="395.94" width="8.2" height="1.9"/>
<rect x="808.10" y="393.54" width="8.2" height="1.6"/><rect x="808.10" y="395.94" width="8.2" height="1.9"/>
<rect x="817.10" y="393.54" width="8.2" height="1.6"/><rect x="817.10" y="395.94" width="8.2" height="1.9"/>
<rect x="826.10" y="393.54" width="8.2" height="1.6"/><rect x="826.10" y="395.94" width="8.2" height="1.9"/>
<rect x="277.10" y="414.52" width="8.2" height="1.6"/><rect x="277.10" y="416.92" width="8.2" height="1.9"/>
<rect x="286.10" y="414.52" width="8.2" height="1.6"/><rect x="286.10" y="416.92" width="8.2" height="1.9"/>
<rect x="295.10" y="414.52" width="8.2" height="1.6"/><rect x="295.10" y="416.92" width="8.2" height="1.9"/>
<rect x="304.10" y="414.52" width="8.2" height="1.6"/><rect x="304.10" y="416.92" width="8.2" height="1.9"/>
<rect x="313.10" y="414.52" width="8.2" height="1.6"/><rect x="313.10" y="416.92" width="8.2" height="1.9"/>
<rect x="322.10" y="414.52" width="8.2" height="1.6"/><rect x="322.10" y="416.92" width="8.2" height="1.9"/>
<rect x="331.10" y="414.52" width="8.2" height="1.6"/><rect x="331.10" y="416.92" width="8.2" height="1.9"/>
<rect x="340.10" y="414.52" width="8.2" height="1.6"/><rect x="340.10" y="416.92" width="8.2" height="1.9"/>
<rect x="349.10" y="414.52" width="8.2" height="1.6"/><rect x="349.10" y="416.92" width="8.2" height="1.9"/>
<rect x="358.10" y="414.52" width="8.2" height="1.6"/><rect x="358.10" y="416.92" width="8.2" height="1.9"/>
<rect x="367.10" y="414.52" width="8.2" height="1.6"/><rect x="367.10" y="416.92" width="8.2" height="1.9"/>
<rect x="376.10" y="414.52" width="8.2" height="1.6"/><rect x="376.10" y="416.92" width="8.2" height="1.9"/>
<rect x="385.10" y="414.52" width="8.2" height="1.6"/><rect x="385.10" y="416.92" width="8.2" height="1.9"/>
<rect x="394.10" y="414.52" width="8.2" height="1.6"/><rect x="394.10" y="416.92" width="8.2" height="1.9"/>
<rect x="403.10" y="414.52" width="8.2" height="1.6"/><rect x="403.10" y="416.92" width="8.2" height="1.9"/>
<rect x="412.10" y="414.52" width="8.2" height="1.6"/><rect x="412.10" y="416.92" width="8.2" height="1.9"/>
<rect x="421.10" y="414.52" width="8.2" height="1.6"/><rect x="421.10" y="416.92" width="8.2" height="1.9"/>
<rect x="430.10" y="414.52" width="8.2" height="1.6"/><rect x="430.10" y="416.92" width="8.2" height="1.9"/>
<rect x="439.10" y="414.52" width="8.2" height="1.6"/><rect x="439.10" y="416.92" width="8.2" height="1.9"/>
<rect x="448.10" y="414.52" width="8.2" height="1.6"/><rect x="448.10" y="416.92" width="8.2" height="1.9"/>
<rect x="457.10" y="414.52" width="8.2" height="1.6"/><rect x="457.10" y="416.92" width="8.2" height="1.9"/>
<rect x="466.10" y="414.52" width="8.2" height="1.6"/><rect x="466.10" y="416.92" width="8.2" height="1.9"/>
<rect x="475.10" y="414.52" width="8.2" height="1.6"/><rect x="475.10" y="416.92" width="8.2" height="1.9"/>
<rect x="484.10" y="414.52" width="8.2" height="1.6"/><rect x="484.10" y="416.92" width="8.2" height="1.9"/>
<rect x="493.10" y="414.52" width="8.2" height="1.6"/><rect x="493.10" y="416.92" width="8.2" height="1.9"/>
<rect x="502.10" y="414.52" width="8.2" height="1.6"/><rect x="502.10" y="416.92" width="8.2" height="1.9"/>
<rect x="511.10" y="414.52" width="8.2" height="1.6"/><rect x="511.10" y="416.92" width="8.2" height="1.9"/>
<rect x="520.10" y="414.52" width="8.2" height="1.6"/><rect x="520.10" y="416.92" width="8.2" height="1.9"/>
<rect x="529.10" y="414.52" width="8.2" height="1.6"/><rect x="529.10" y="416.92" width="8.2" height="1.9"/>
<rect x="538.10" y="414.52" width="8.2" height="1.6"/><rect x="538.10" y="416.92" width="8.2" height="1.9"/>
<rect x="547.10" y="414.52" width="8.2" height="1.6"/><rect x="547.10" y="416.92" width="8.2" height="1.9"/>
<rect x="556.10" y="414.52" width="8.2" height="1.6"/><rect x="556.10" y="416.92" width="8.2" height="1.9"/>
<rect x="565.10" y="414.52" width="8.2" height="1.6"/><rect x="565.10" y="416.92" width="8.2" height="1.9"/>
<rect x="574.10" y="414.52" width="8.2" height="1.6"/><rect x="574.10" y="416.92" width="8.2" height="1.9"/>
<rect x="583.10" y="414.52" width="8.2" height="1.6"/><rect x="583.10" y="416.92" width="8.2" height="1.9"/>
<rect x="592.10" y="414.52" width="8.2" height="1.6"/><rect x="592.10" y="416.92" width="8.2" height="1.9"/>
<rect x="601.10" y="414.52" width="8.2" height="1.6"/><rect x="601.10" y="416.92" width="8.2" height="1.9"/>
<rect x="610.10" y="414.52" width="8.2" height="1.6"/><rect x="610.10" y="416.92" width="8.2" height="1.9"/>
<rect x="619.10" y="414.52" width="8.2" height="1.6"/><rect x="619.10" y="416.92" width="8.2" height="1.9"/>
<rect x="628.10" y="414.52" width="8.2" height="1.6"/><rect x="628.10" y="416.92" width="8.2" height="1.9"/>
<rect x="637.10" y="414.52" width="8.2" height="1.6"/><rect x="637.10" y="416.92" width="8.2" height="1.9"/>
<rect x="646.10" y="414.52" width="8.2" height="1.6"/><rect x="646.10" y="416.92" width="8.2" height="1.9"/>
<rect x="655.10" y="414.52" width="8.2" height="1.6"/><rect x="655.10" y="416.92" width="8.2" height="1.9"/>
<rect x="664.10" y="414.52" width="8.2" height="1.6"/><rect x="664.10" y="416.92" width="8.2" height="1.9"/>
<rect x="673.10" y="414.52" width="8.2" height="1.6"/><rect x="673.10" y="416.92" width="8.2" height="1.9"/>
<rect x="682.10" y="414.52" width="8.2" height="1.6"/><rect x="682.10" y="416.92" width="8.2" height="1.9"/>
<rect x="691.10" y="414.52" width="8.2" height="1.6"/><rect x="691.10" y="416.92" width="8.2" height="1.9"/>
<rect x="700.10" y="414.52" width="8.2" height="1.6"/><rect x="700.10" y="416.92" width="8.2" height="1.9"/>
<rect x="709.10" y="414.52" width="8.2" height="1.6"/><rect x="709.10" y="416.92" width="8.2" height="1.9"/>
<rect x="718.10" y="414.52" width="8.2" height="1.6"/><rect x="718.10" y="416.92" width="8.2" height="1.9"/>
<rect x="727.10" y="414.52" width="8.2" height="1.6"/><rect x="727.10" y="416.92" width="8.2" height="1.9"/>
<rect x="736.10" y="414.52" width="8.2" height="1.6"/><rect x="736.10" y="416.92" width="8.2" height="1.9"/>
<rect x="745.10" y="414.52" width="8.2" height="1.6"/><rect x="745.10" y="416.92" width="8.2" height="1.9"/>
<rect x="754.10" y="414.52" width="8.2" height="1.6"/><rect x="754.10" y="416.92" width="8.2" height="1.9"/>
<rect x="763.10" y="414.52" width="8.2" height="1.6"/><rect x="763.10" y="416.92" width="8.2" height="1.9"/>
<rect x="772.10" y="414.52" width="8.2" height="1.6"/><rect x="772.10" y="416.92" width="8.2" height="1.9"/>
<rect x="781.10" y="414.52" width="8.2" height="1.6"/><rect x="781.10" y="416.92" width="8.2" height="1.9"/>
<rect x="790.10" y="414.52" width="8.2" height="1.6"/><rect x="790.10" y="416.92" width="8.2" height="1.9"/>
<rect x="799.10" y="414.52" width="8.2" height="1.6"/><rect x="799.10" y="416.92" width="8.2" height="1.9"/>
<rect x="808.10" y="414.52" width="8.2" height="1.6"/><rect x="808.10" y="416.92" width="8.2" height="1.9"/>
<rect x="817.10" y="414.52" width="8.2" height="1.6"/><rect x="817.10" y="416.92" width="8.2" height="1.9"/>
<rect x="826.10" y="414.52" width="8.2" height="1.6"/><rect x="826.10" y="416.92" width="8.2" height="1.9"/>
<rect x="62.50" y="459.1" width="6.1" height="2"/>
<rect x="71.50" y="459.1" width="6.1" height="2"/>
<rect x="80.50" y="459.1" width="6.1" height="2"/>
<rect x="89.50" y="459.1" width="6.1" height="2"/>
<rect x="98.50" y="459.1" width="6.1" height="2"/>
<rect x="107.50" y="459.1" width="6.1" height="2"/>
<rect x="116.50" y="459.1" width="6.1" height="2"/>
<rect x="125.50" y="459.1" width="6.1" height="2"/>
<rect x="134.50" y="459.1" width="6.1" height="2"/>
<rect x="143.50" y="459.1" width="6.1" height="2"/>
<rect x="152.50" y="459.1" width="6.1" height="2"/>
<rect x="161.50" y="459.1" width="6.1" height="2"/>
<rect x="170.50" y="459.1" width="6.1" height="2"/>
<rect x="179.50" y="459.1" width="6.1" height="2"/>
<rect x="188.50" y="459.1" width="6.1" height="2"/>
<rect x="197.50" y="459.1" width="6.1" height="2"/>
<rect x="206.50" y="459.1" width="6.1" height="2"/>
<rect x="215.50" y="459.1" width="6.1" height="2"/>
<rect x="224.50" y="459.1" width="6.1" height="2"/>
<rect x="233.50" y="459.1" width="6.1" height="2"/>
<rect x="242.50" y="459.1" width="6.1" height="2"/>
<rect x="251.50" y="459.1" width="6.1" height="2"/>
<rect x="260.50" y="459.1" width="6.1" height="2"/>
<rect x="269.50" y="459.1" width="6.1" height="2"/>
<rect x="278.50" y="459.1" width="6.1" height="2"/>
<rect x="287.50" y="459.1" width="6.1" height="2"/>
<rect x="296.50" y="459.1" width="6.1" height="2"/>
<rect x="305.50" y="459.1" width="6.1" height="2"/>
<rect x="314.50" y="459.1" width="6.1" height="2"/>
<rect x="323.50" y="459.1" width="6.1" height="2"/>
<rect x="332.50" y="459.1" width="6.1" height="2"/>
<rect x="341.50" y="459.1" width="6.1" height="2"/>
<rect x="350.50" y="459.1" width="6.1" height="2"/>
<rect x="359.50" y="459.1" width="6.1" height="2"/>
<rect x="368.50" y="459.1" width="6.1" height="2"/>
<rect x="377.50" y="459.1" width="6.1" height="2"/>
<rect x="386.50" y="459.1" width="6.1" height="2"/>
<rect x="395.50" y="459.1" width="6.1" height="2"/>
<rect x="404.50" y="459.1" width="6.1" height="2"/>
<rect x="413.50" y="459.1" width="6.1" height="2"/>
<rect x="422.50" y="459.1" width="6.1" height="2"/>
<rect x="431.50" y="459.1" width="6.1" height="2"/>
<rect x="440.50" y="459.1" width="6.1" height="2"/>
<rect x="449.50" y="459.1" width="6.1" height="2"/>
<rect x="458.50" y="459.1" width="6.1" height="2"/>
<rect x="467.50" y="459.1" width="6.1" height="2"/>
<rect x="476.50" y="459.1" width="6.1" height="2"/>
<rect x="485.50" y="459.1" width="6.1" height="2"/>
<rect x="494.50" y="459.1" width="6.1" height="2"/>
<rect x="503.50" y="459.1" width="6.1" height="2"/>
<rect x="512.50" y="459.1" width="6.1" height="2"/>
<rect x="521.50" y="459.1" width="6.1" height="2"/>
<rect x="530.50" y="459.1" width="6.1" height="2"/>
<rect x="539.50" y="459.1" width="6.1" height="2"/>
<rect x="548.50" y="459.1" width="6.1" height="2"/>
<rect x="557.50" y="459.1" width="6.1" height="2"/>
<rect x="566.50" y="459.1" width="6.1" height="2"/>
<rect x="575.50" y="459.1" width="6.1" height="2"/>
<rect x="584.50" y="459.1" width="6.1" height="2"/>
<rect x="593.50" y="459.1" width="6.1" height="2"/>
<rect x="602.50" y="459.1" width="6.1" height="2"/>
<rect x="611.50" y="459.1" width="6.1" height="2"/>
<rect x="189.3" y="948.1" width="2.2" height="1" fill="#5a5a5a"/>
<rect x="91.60" y="855" width="6" height="2"/>
<rect x="100.60" y="855" width="6" height="2"/>
<rect x="109.60" y="855" width="6" height="2"/>
</g>
<g stroke="#838187" stroke-width="1.4" fill="none"><path d="M1262 46.8 H1265.3 L1269.2 54.2 H1272 M1268.1 46.8 H1272"/>
<path d="M1277.65 47.45 V53.25 M1280.85 47.45 V53.25 M1276.35 48.75 H1282.15 M1276.35 51.95 H1282.15"/>
<circle cx="1276.35" cy="47.45" r="1.3"/>
<circle cx="1276.35" cy="53.25" r="1.3"/>
<circle cx="1282.15" cy="47.45" r="1.3"/>
<circle cx="1282.15" cy="53.25" r="1.3"/>
</g>
</svg>
<div class="thumb"></div>
<div style="position:absolute;left:1285.8px;top:44px;font-family:'Liberation Sans',sans-serif;font-size:12.8px;font-weight:bold;color:#838187;line-height:14px">2</div>
</body></html>
